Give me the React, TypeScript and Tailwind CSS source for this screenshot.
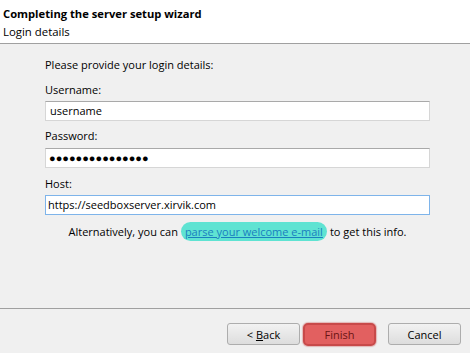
import React from "react";

export default function App() {
  const font = { fontFamily: '"Open Sans", "Noto Sans", sans-serif' };
  return (
    <div className="w-[470px] h-[353px] bg-[#f0f0f0] flex flex-col text-[11px] text-black overflow-hidden" style={font}>
      <div className="h-[44px] bg-white border-b border-[#a0a0a0] px-[3px] pt-[5px] leading-[18px]">
        <div className="font-bold text-[11.2px]">Completing the server setup wizard</div>
        <div className="text-[11.4px]">Login details</div>
      </div>
      <div className="h-[265px] border-b border-[#a0a0a0] pl-[45px] pr-[40px] pt-[13px] flex flex-col leading-[16px]">
        <div>Please provide your login details:</div>
        <div className="mt-[9px]">Username:</div>
        <div className="mt-[3px] h-[20px] bg-white border border-[#d6d6d6] border-t-[#a9a9a9] px-[4px] flex items-center">username</div>
        <div className="mt-[7px]">Password:</div>
        <div className="mt-[4px] h-[20px] bg-white border border-[#d6d6d6] border-t-[#a9a9a9] px-[3px] flex items-center text-[11px]">
          {"●●●●●●●●●●●●●●●"}
        </div>
        <div className="mt-[8px]">Host:</div>
        <div className="mt-[3px] h-[20px] bg-white border border-[#7eb4ea] px-[2px] flex items-center">https://seedboxserver.xirvik.com</div>
        <div className="mt-[7px] flex items-center justify-center">
          <span>Alternatively, you can</span>
          <span className="mx-[3px] h-[19px] px-[4px] rounded-full bg-[#5fe3d2] flex items-center">
            <span className="text-[#1a7fc0] underline">parse your welcome e-mail</span>
          </span>
          <span>to get this info.</span>
        </div>
      </div>
      <div className="flex-1 flex items-start pt-[14px] pl-[227px]">
        <button className="w-[73px] h-[22px] rounded-[3px] border border-[#adadad] bg-gradient-to-b from-[#f2f2f2] to-[#dddddd] text-[11px] leading-none">
          &lt; <span className="underline">B</span>ack
        </button>
        <button className="ml-[3px] w-[73px] h-[23px] rounded-[5px] border-2 border-[#c84a4a] bg-[#e26060] text-[#6a1414] text-[11px] leading-none shadow-[0_0_1px_1px_rgba(200,74,74,0.35)]">
          Finish
        </button>
        <button className="ml-[12px] w-[73px] h-[22px] rounded-[3px] border border-[#adadad] bg-gradient-to-b from-[#f2f2f2] to-[#dddddd] text-[11px] leading-none">
          Cancel
        </button>
      </div>
    </div>
  );
}
